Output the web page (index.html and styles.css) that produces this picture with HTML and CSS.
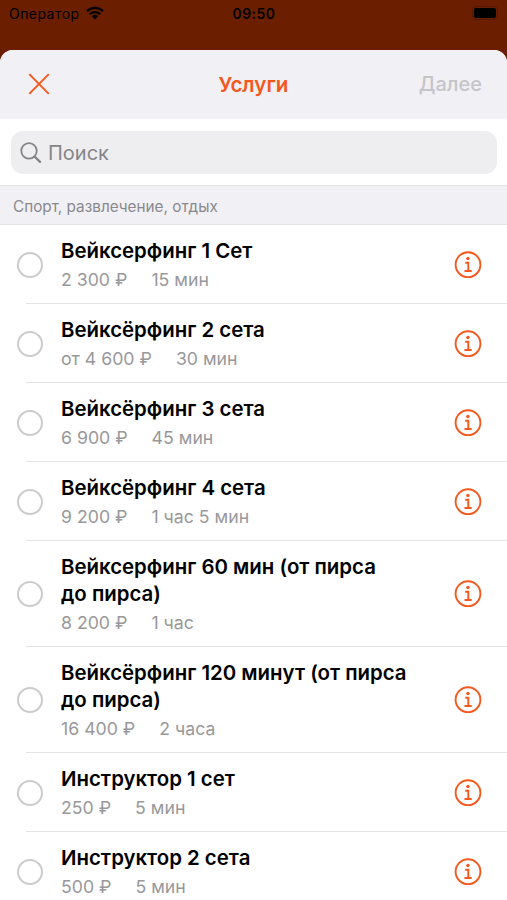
FILE: index.html
```html
<!DOCTYPE html>
<html lang="ru">
<head>
  <meta charset="UTF-8">
  <meta name="viewport" content="width=device-width, initial-scale=1.0">
  <title>Услуги</title>
  <link rel="stylesheet" href="styles.css">
</head>
<body>
  <!-- shared icons -->
  <svg class="sprite" aria-hidden="true">
    <symbol id="icon-info" viewBox="0 0 28 28">
      <circle cx="14" cy="13.7" r="12.4" fill="none" stroke="currentColor" stroke-width="1.9"/>
      <circle cx="13.9" cy="7.5" r="1.7" fill="currentColor"/>
      <path d="M11.2 11.8h3.1v8.1M10.5 20h7.2" fill="none" stroke="currentColor" stroke-width="1.9"/>
    </symbol>
  </svg>

  <header class="status-bar">
    <div class="carrier">
      <span>Оператор</span>
      <svg class="wifi" viewBox="0 0 18 14">
        <path d="M1 5.1a11.5 11.5 0 0 1 16 0M3.8 8.2a7.5 7.5 0 0 1 10.4 0" fill="none" stroke="#000" stroke-width="2.3"/>
        <path d="M5.9 10.2a4.5 4.5 0 0 1 6.2 0L9 13.4z"/>
      </svg>
    </div>
    <span class="time">09:50</span>
    <div class="battery"><span class="battery-level"></span></div>
  </header>

  <main class="sheet">
    <nav class="navbar">
      <svg class="close" viewBox="0 0 22 22">
        <path d="M1.2 1.2l19.6 19.6M20.8 1.2L1.2 20.8" fill="none" stroke="currentColor" stroke-width="1.9"/>
      </svg>
      <h1 class="navbar-title">Услуги</h1>
      <span class="next">Далее</span>
    </nav>

    <div class="search-wrap">
      <div class="search">
        <svg class="search-icon" viewBox="0 0 22 22">
          <circle cx="9" cy="8.9" r="7.7" fill="none" stroke="currentColor" stroke-width="1.8"/>
          <path d="M14.6 14.5l5.4 5.4" fill="none" stroke="currentColor" stroke-width="2.3" stroke-linecap="round"/>
        </svg>
        <span class="search-text">Поиск</span>
      </div>
    </div>

    <h2 class="section-title"><span>Спорт, развлечение, отдых</span></h2>

    <ul class="services">
      <li class="service">
        <span class="radio"></span>
        <div class="info">
          <h3><span>Вейксерфинг 1 Сет</span></h3>
          <p><span>2 300 ₽</span><span>15 мин</span></p>
        </div>
        <svg class="info-icon"><use href="#icon-info"/></svg>
      </li>
      <li class="service">
        <span class="radio"></span>
        <div class="info">
          <h3><span>Вейксёрфинг 2 сета</span></h3>
          <p><span>от 4 600 ₽</span><span>30 мин</span></p>
        </div>
        <svg class="info-icon"><use href="#icon-info"/></svg>
      </li>
      <li class="service">
        <span class="radio"></span>
        <div class="info">
          <h3><span>Вейксёрфинг 3 сета</span></h3>
          <p><span>6 900 ₽</span><span>45 мин</span></p>
        </div>
        <svg class="info-icon"><use href="#icon-info"/></svg>
      </li>
      <li class="service">
        <span class="radio"></span>
        <div class="info">
          <h3><span>Вейксёрфинг 4 сета</span></h3>
          <p><span>9 200 ₽</span><span>1 час 5 мин</span></p>
        </div>
        <svg class="info-icon"><use href="#icon-info"/></svg>
      </li>
      <li class="service">
        <span class="radio"></span>
        <div class="info">
          <h3>Вейксерфинг 60 мин (от пирса<br>до пирса)</h3>
          <p><span>8 200 ₽</span><span>1 час</span></p>
        </div>
        <svg class="info-icon"><use href="#icon-info"/></svg>
      </li>
      <li class="service">
        <span class="radio"></span>
        <div class="info">
          <h3>Вейксёрфинг 120 минут (от пирса<br>до пирса)</h3>
          <p><span>16 400 ₽</span><span>2 часа</span></p>
        </div>
        <svg class="info-icon"><use href="#icon-info"/></svg>
      </li>
      <li class="service">
        <span class="radio"></span>
        <div class="info">
          <h3><span>Инструктор 1 сет</span></h3>
          <p><span>250 ₽</span><span>5 мин</span></p>
        </div>
        <svg class="info-icon"><use href="#icon-info"/></svg>
      </li>
      <li class="service">
        <span class="radio"></span>
        <div class="info">
          <h3><span>Инструктор 2 сета</span></h3>
          <p><span>500 ₽</span><span>5 мин</span></p>
        </div>
        <svg class="info-icon"><use href="#icon-info"/></svg>
      </li>
    </ul>
  </main>
</body>
</html>
```

FILE: styles.css
```css
:root {
  --accent: #f4581c;
  --backdrop: #6b1f00;
  --bar: #f1f0f5;
  --gray: #98989b;
  --divider: #e4e4e6;
}
*, *::before, *::after {
  box-sizing: border-box;
}
body, h1, h2, h3, p, ul, li {
  margin: 0;
  padding: 0;
}
body {
  height: 900px;
  overflow: hidden;
  display: flex;
  flex-direction: column;
  font-family: Inter, "Liberation Sans", sans-serif;
  background: var(--backdrop);
  color: #000;
}
.sprite {
  display: none;
}

/* status bar */
.status-bar {
  flex: none;
  display: grid;
  grid-template-columns: 1fr auto 1fr;
  align-items: center;
  height: 50px;
  padding: 0 8px 22px 9px;
  font-size: 14px;
  line-height: 20px;
}
.carrier {
  display: flex;
  align-items: center;
  gap: 6px;
  letter-spacing: 0.45px;
}
.wifi {
  width: 18px;
  height: 14px;
  margin-top: -2px;
}
.time {
  font-weight: 600;
  letter-spacing: 0.5px;
}
.battery {
  justify-self: end;
  padding: 1px;
  margin-top: -2px;
  margin-right: 1px;
  border: 1px solid #561900;
  border-radius: 4px;
}
.battery-level {
  display: block;
  width: 22px;
  height: 10px;
  border-radius: 2px;
  background: #000;
}

/* sheet */
.sheet {
  flex: 1;
  min-height: 0;
  overflow: hidden;
  border-radius: 13px 13px 0 0;
  background: #fff;
}
.navbar {
  display: grid;
  grid-template-columns: 1fr auto 1fr;
  align-items: center;
  height: 69px;
  padding: 0 25px 0 28px;
  background: var(--bar);
}
.close {
  width: 22px;
  height: 22px;
  margin-top: -1px;
  color: var(--accent);
}
.navbar-title {
  margin-left: -3px;
  color: var(--accent);
  font-size: 20.6px;
  font-weight: 600;
}
.next {
  justify-self: end;
  margin-top: -1px;
  color: #c5c5c9;
  font-size: 20px;
  font-weight: 500;
}
.search-wrap {
  height: 66px;
  padding: 12px 10px 11px 11px;
}
.search {
  display: flex;
  align-items: center;
  gap: 6px;
  height: 43px;
  padding: 0 9px;
  border-radius: 12px;
  background: #eeeef0;
  color: #858589;
  font-size: 20px;
}
.search-icon {
  width: 22px;
  height: 22px;
}
.section-title {
  height: 40px;
  padding: 0 13px;
  border-top: 1px solid var(--divider);
  border-bottom: 1px solid var(--divider);
  background: var(--bar);
  color: #89898d;
  font-size: 15.3px;
  font-weight: 400;
  line-height: 41px;
}

/* services */
.services {
  list-style: none;
}
.service {
  position: relative;
  display: flex;
  align-items: center;
  padding: 12px 25px 13px 17px;
}
.service::after {
  content: "";
  position: absolute;
  left: 26px;
  right: 0;
  bottom: 0;
  height: 1px;
  background: var(--divider);
}
.radio {
  flex: none;
  width: 26px;
  height: 26px;
  margin-top: 1px;
  margin-right: 18px;
  border: 2px solid #cbcbcd;
  border-radius: 50%;
}
.info {
  flex: 1;
  white-space: nowrap;
}
.info h3 {
  font-size: 20.4px;
  font-weight: 600;
  line-height: 27px;
}
.info p {
  display: flex;
  gap: 24px;
  margin-top: 4px;
  color: var(--gray);
  font-size: 17.7px;
  line-height: 23px;
}
.info-icon {
  flex: none;
  width: 28px;
  height: 28px;
  margin-top: 1px;
  color: var(--accent);
}
```
